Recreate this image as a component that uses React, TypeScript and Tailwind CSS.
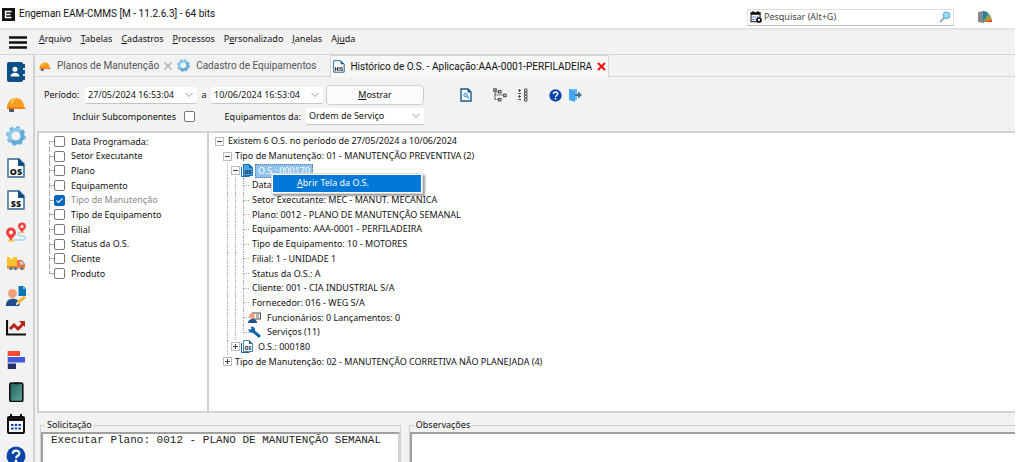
import { useState } from 'react';
import type { ReactNode } from 'react';

const HelmetIcon = ({ size }: { size: number }) => (
  <svg width={size} height={size} viewBox="0 0 20 20">
    <path d="M3 14l5 1v3H4l-1-1z" fill="#4b5563" />
    <path d="M1 14C1 8 5 4 10 4c5 0 8 4 8 9l2 2H1z" fill="#fb9d1e" />
    <path d="M4 8c2-3 4-4 7-4-3 2-4 4-4 7z" fill="#fdbf4e" />
    <path d="M1 13h17l2 2H1z" fill="#f4801f" />
  </svg>
);

const GearIcon = ({ size }: { size: number }) => (
  <svg width={size} height={size} viewBox="0 0 20 20" fill="none">
    <circle cx="10" cy="10" r="8.6" stroke="#6cb2dc" strokeWidth="2.4" strokeDasharray="3.4 3.35" />
    <circle cx="10" cy="10" r="6.6" stroke="#8cc8ea" strokeWidth="4" />
    <path d="M14.600 5.400a6.500 6.500 0 0 1-9.200 9.200" stroke="#62a9d4" strokeWidth="3.800" />
  </svg>
);

const FileIcon = ({ label, size }: { label: string; size: number }) => (
  <svg width={size} height={size} viewBox="0 0 20 20">
    <path d="M2 1h11l5 5v13H2z" fill="#fff" stroke="#2a6591" strokeWidth="1.4" />
    <path d="M12 1h1l5 5v2h-6z" fill="#0d4f80" />
    <text x="10" y="16.5" textAnchor="middle" fontSize="9" fontWeight="800" fontFamily="Open Sans, sans-serif" fill="#111">
      {label}
    </text>
  </svg>
);

const OsIcon = ({ selected }: { selected?: boolean }) => (
  <svg width="12" height="13" viewBox="0 0 12 13">
    <path d="M.5 3v9.500h8" fill="none" stroke={selected ? '#1672b8' : '#2a6591'} />
    <path d="M2.500 .5h6l3 3v8h-9z" fill={selected ? '#4ba3e3' : '#fff'} stroke={selected ? '#1672b8' : '#4a86b0'} />
    <path d="M8 .5v3.500h3.500z" fill={selected ? '#1672b8' : '#2a6591'} />
    <text x="7" y="9.500" textAnchor="middle" fontSize="5" fontWeight="800" fontFamily="Open Sans, sans-serif" fill="#173d5c">
      OS
    </text>
  </svg>
);

const HelpIcon = ({ size }: { size: number }) => (
  <svg width={size} height={size} viewBox="0 0 20 20" fill="none">
    <circle cx="10" cy="10" r="9.500" fill="#0a45a8" />
    <path d="M6.800 7.800c0-4.200 6.600-4.200 6.600-.4 0 2.400-3.300 2.300-3.300 4.800" stroke="#fff" strokeWidth="2.200" />
    <circle cx="10" cy="15" r="1.400" fill="#fff" />
  </svg>
);

const ContactsIcon = () => (
  <svg width="20" height="20" viewBox="0 0 20 20">
    <rect x="1" width="16" height="20" rx="2" fill="#0b4f86" />
    <path d="M16.500 2h2.500v4h-2.500zM16.500 8h2.500v4h-2.500zM16.500 14h2.500v4h-2.500z" fill="#0b4f86" />
    <circle cx="9" cy="7.200" r="2.500" fill="#fff" />
    <path d="M4.500 14.500c0-5 9-5 9 0z" fill="#fff" />
  </svg>
);

const RouteIcon = () => (
  <svg width="20" height="20" viewBox="0 0 20 20">
    <path d="M6 18h11c3 0 3-4 0-4h-3c-3 0-3-4 2-4" fill="none" stroke="#a9d6ee" strokeWidth="1.300" />
    <ellipse cx="5" cy="18.500" rx="3.500" ry="1.300" fill="#f7c64a" />
    <ellipse cx="16" cy="10.500" rx="2.500" ry="1" fill="#f7c64a" />
    <path d="M5 18.500C2 14 0 13 0 10.500a5 5 0 0 1 10 0C10 13 8 14 5 18.500z" fill="#f0413f" />
    <circle cx="5" cy="10.500" r="1.900" fill="#fff" />
    <path d="M16 10.500c-2-3-4-4-4-6a4 4 0 0 1 8 0c0 2-2 3-4 6z" fill="#f0413f" />
    <circle cx="16" cy="4.500" r="1.500" fill="#fff" />
  </svg>
);

const TruckIcon = () => (
  <svg width="20" height="20" viewBox="0 0 20 20">
    <path d="M1 3h3v2h3V3h4v10H1z" fill="#fbc02d" />
    <path d="M11 6h5l3 4v4h-8z" fill="#f26b4a" />
    <path d="M14 7.500h2l2 3h-4z" fill="#b9dcf2" />
    <path d="M1 12h18v2.500H1z" fill="#e88a2d" />
    <circle cx="5" cy="14.500" r="1.800" fill="#6b7684" />
    <circle cx="9.500" cy="14.500" r="1.800" fill="#6b7684" />
    <circle cx="16" cy="14.500" r="1.800" fill="#6b7684" />
  </svg>
);

const UserEditIcon = () => (
  <svg width="20" height="20" viewBox="0 0 20 20">
    <path d="M12.500 0h5l2.500 2.500V10h-7.500z" fill="#0b74b8" />
    <path d="M17 0v3h3z" fill="#7cc4ee" />
    <circle cx="6.500" cy="7.500" r="4.500" fill="#f2a07b" />
    <path d="M0 19c0-8 13-8 14-1l-1 2H0z" fill="#1f4e8c" />
    <path d="M10 19l1-3.500 7-6 2 2.300-7 6.200z" fill="#f6b63c" />
    <path d="M10 19l1-3 2 2z" fill="#fff" />
  </svg>
);

const TrendIcon = () => (
  <svg width="20" height="20" viewBox="0 0 20 20" fill="none">
    <path d="M1 2v14.500h19" stroke="#111" strokeWidth="2.200" />
    <path d="M4 11l4-4 4 4 5-5" stroke="#b32318" strokeWidth="3" />
    <path d="M13 3h6v6z" fill="#b32318" />
  </svg>
);

const BarsIcon = () => (
  <svg width="20" height="20" viewBox="0 0 20 20">
    <path d="M1.500 1v18" stroke="#c5c9d0" />
    <path d="M2 1h12v5H2z" fill="#fb4a32" />
    <path d="M2 7h17v5.500H2z" fill="#3f5bd8" />
    <path d="M2 13.500h8V19H2z" fill="#27306b" />
  </svg>
);

const PhoneIcon = () => (
  <svg width="20" height="20" viewBox="0 0 20 20">
    <defs>
      <linearGradient id="screen" x1="0" y1="0" x2="1" y2="1">
        <stop offset="0" stopColor="#1f5f5f" />
        <stop offset="1" stopColor="#63a59a" />
      </linearGradient>
    </defs>
    <rect x="3.800" y="1" width="13" height="18.500" rx="1.500" fill="url(#screen)" stroke="#111" strokeWidth="1.600" />
    <path d="M8 1.500h5" stroke="#111" strokeWidth="1.500" />
  </svg>
);

const CalendarIcon = () => (
  <svg width="20" height="20" viewBox="0 0 20 20">
    <path d="M5 0v4M15 0v4" stroke="#111" strokeWidth="2" />
    <rect x="2" y="3" width="16" height="16" rx="1" fill="#fff" stroke="#111" strokeWidth="2" />
    <path d="M2 3h16v4H2z" fill="#111" />
    <path d="M5 11h10M5 14.500h10" stroke="#1648a5" strokeWidth="2" strokeDasharray="2.500 1.250" />
  </svg>
);

const MagnifierIcon = () => (
  <svg width="12" height="12" viewBox="0 0 12 12">
    <path d="M1 11l4-4" stroke="#8a8f99" strokeWidth="1.600" />
    <circle cx="7.500" cy="4.300" r="3.400" fill="#9ddcf7" stroke="#5aa7cf" />
  </svg>
);

const sidebarItems = [
  { name: 'Contatos', icon: <ContactsIcon /> },
  { name: 'Planos de Manutenção', icon: <HelmetIcon size={20} /> },
  { name: 'Equipamentos', icon: <GearIcon size={20} /> },
  { name: 'Ordens de Serviço', icon: <FileIcon label="OS" size={20} /> },
  { name: 'Solicitações de Serviço', icon: <FileIcon label="SS" size={20} /> },
  { name: 'Rotas', icon: <RouteIcon /> },
  { name: 'Transporte', icon: <TruckIcon /> },
  { name: 'Funcionários', icon: <UserEditIcon /> },
  { name: 'Indicadores', icon: <TrendIcon /> },
  { name: 'Gantt', icon: <BarsIcon /> },
  { name: 'Mobile', icon: <PhoneIcon /> },
  { name: 'Calendário', icon: <CalendarIcon /> },
  { name: 'Ajuda', icon: <HelpIcon size={20} /> }
];

// [text before the access key, access key, rest]
const menuItems = [
  ['', 'A', 'rquivo'],
  ['', 'T', 'abelas'],
  ['', 'C', 'adastros'],
  ['', 'P', 'rocessos'],
  ['P', 'e', 'rsonalizado'],
  ['', 'J', 'anelas'],
  ['Aj', 'u', 'da']
];

const groupings = [
  'Data Programada:',
  'Setor Executante',
  'Plano',
  'Equipamento',
  'Tipo de Manutenção',
  'Tipo de Equipamento',
  'Filial',
  'Status da O.S.',
  'Cliente',
  'Produto'
];

const orderDetails = [
  'Setor Executante: MEC - MANUT. MECANICA',
  'Plano: 0012 - PLANO DE MANUTENÇÃO SEMANAL',
  'Equipamento: AAA-0001 - PERFILADEIRA',
  'Tipo de Equipamento: 10 - MOTORES',
  'Filial: 1 - UNIDADE 1',
  'Status da O.S.: A',
  'Cliente: 001 - CIA INDUSTRIAL S/A',
  'Fornecedor: 016 - WEG S/A'
];

const Combo = ({ id, label, value, className }: { id: string; label: string; value: string; className: string }) => (
  <div className={`relative h-[17px] ${className}`}>
    <select
      id={id}
      aria-label={label}
      className="w-full h-full appearance-none bg-white border-b border-[#c4c4c4] rounded-xs pl-[3px] pr-4 leading-4 outline-none"
    >
      <option>{value}</option>
    </select>
    <svg className="absolute right-1 top-[5px] pointer-events-none" width="8" height="6" viewBox="0 0 8 6">
      <path d="M.5 1L4 4.500 7.500 1" fill="none" stroke="#999" />
    </svg>
  </div>
);

const Expander = ({ open }: { open?: boolean }) => (
  <button
    aria-label={open ? 'Recolher' : 'Expandir'}
    className="w-[9px] h-[9px] shrink-0 bg-white border border-[#bdbdbd] flex items-center justify-center"
  >
    <svg width="5" height="5" viewBox="0 0 5 5">
      <path d={open ? 'M0 2.500h5' : 'M0 2.500h5M2.500 0v5'} stroke="#444" />
    </svg>
  </button>
);

const Guide = ({ className }: { className: string }) => (
  <span className={`self-stretch shrink-0 border-l border-dotted border-[#a8a8a8] ${className}`}></span>
);

const Leaf = ({ children, last }: { children: ReactNode; last?: boolean }) => (
  <li className="flex items-center pl-4">
    <Guide className="w-2" />
    <Guide className="w-2" />
    <span className="self-stretch w-[9px] shrink-0 flex flex-col">
      <span className="flex-1 w-[6px] border-l border-b border-dotted border-[#a8a8a8]"></span>
      <span className={`flex-1 ${last ? '' : 'border-l border-dotted border-[#a8a8a8]'}`}></span>
    </span>
    {children}
  </li>
);

const ToolButton = ({ label, children }: { label: string; children: ReactNode }) => (
  <button aria-label={label} className="w-[14px] h-[14px] flex items-center justify-center">
    {children}
  </button>
);

const App = () => {
  const [checked, setChecked] = useState(['Tipo de Manutenção']);

  const toggle = (name: string) => {
    setChecked(checked.includes(name) ? checked.filter((c) => c !== name) : [...checked, name]);
  };

  return (
    <div className="h-screen flex flex-col overflow-hidden bg-white pr-[9px] font-['Noto_Sans',sans-serif] text-[9px] leading-[14px] text-[#111] whitespace-nowrap">
      {/* Title bar */}
      <header className="h-7 shrink-0 flex items-center pl-[2px] pr-[23px]">
        <svg width="13" height="13" viewBox="0 0 13 13" className="shrink-0">
          <rect width="13" height="13" fill="#111" />
          <path d="M9.500 3.500h-6v6h6M3.500 6.500h5" fill="none" stroke="#fff" strokeWidth="1.400" />
        </svg>
        <h1 className="ml-1 font-[Roboto,sans-serif] text-[10px]">Engeman EAM-CMMS [M - 11.2.6.3] - 64 bits</h1>
        <div className="ml-auto mt-[6px] w-[207px] h-[17px] flex items-center gap-[2px] px-[2px] border border-[#e0e0e0] border-b-[#bbb]">
          <svg width="12" height="12" viewBox="0 0 12 12" className="shrink-0">
            <path d="M3 0v2M8 0v2" stroke="#111" strokeWidth="1.300" />
            <rect x="1" y="1.700" width="9" height="9" fill="#fff" stroke="#111" />
            <path d="M1 1.500h9.500v2.300H1z" fill="#111" />
            <path d="M2.500 6h6M2.500 8.500h3" stroke="#1b45d0" strokeDasharray="1.500 .7" />
            <circle cx="9" cy="9" r="2" fill="#fff" stroke="#111" strokeWidth="1.700" />
          </svg>
          <input aria-label="Pesquisar" placeholder="Pesquisar (Alt+G)" className="flex-1 min-w-0 outline-none placeholder:text-[#444]" />
          <MagnifierIcon />
        </div>
        <button aria-label="Tema" className="ml-6 mt-[6px]">
          <svg width="14" height="12" viewBox="0 0 14 12">
            <path d="M0 1l6-1v12l-6-1z" fill="#85898d" />
            <path d="M5 0c5 0 8 4 9 11H5z" fill="#2c7f9f" />
            <path d="M5 11l5-8c2 1 3 3 3 4z" fill="#79b051" />
            <path d="M5 11l8-5 1 5z" fill="#ee8a2c" />
            <path d="M5 11l9-2v2z" fill="#d94732" />
          </svg>
        </button>
      </header>

      {/* Menu bar */}
      <nav className="h-[27px] shrink-0 flex items-center bg-[#f2f2f2] border-t-2 border-b border-t-[#e3e3e3] border-b-[#d5d5d5]">
        <button aria-label="Menu" className="w-[39px] pl-[9px]">
          <svg width="18" height="13" viewBox="0 0 18 13">
            <path d="M0 1.500h18M0 6.500h18M0 11.500h18" stroke="#111" strokeWidth="2.600" />
          </svg>
        </button>
        <div className="flex gap-[9px] pb-[6px]">
          {menuItems.map(([before, key, after]) => (
            <button key={before + key + after}>
              {before}
              <u>{key}</u>
              {after}
            </button>
          ))}
        </div>
      </nav>

      <div className="flex-1 min-h-0 flex bg-[#f2f2f2]">
        {/* Sidebar */}
        <aside className="w-[35px] shrink-0 border-r-2 border-[#d0d0d0] flex flex-col gap-3 pt-[7px] pl-[6px] overflow-hidden">
          {sidebarItems.map((item) => (
            <button key={item.name} aria-label={item.name} className="w-5 h-5 shrink-0">
              {item.icon}
            </button>
          ))}
        </aside>

        <main className="flex-1 min-w-0 flex flex-col">
          {/* Tabs */}
          <div className="h-[22px] shrink-0 flex font-[Roboto,sans-serif] text-[10px] text-[#555]">
            <div className="flex items-center pl-1 border-b border-[#d5d5d5]">
              <HelmetIcon size={12} />
              <button className="ml-[6px]">Planos de Manutenção</button>
              <button aria-label="Fechar Planos de Manutenção" className="ml-[5px]">
                <svg width="8" height="8" viewBox="0 0 8 8">
                  <path d="M.5 .5l7 7M7.500 .5l-7 7" stroke="#aaa" strokeWidth="1.300" />
                </svg>
              </button>
              <span className="ml-[5px]">
                <GearIcon size={13} />
              </span>
              <button className="ml-[6px] pr-[14px]">Cadastro de Equipamentos</button>
            </div>
            <div className="flex items-center px-[2px] bg-[#f8f8f8] border border-b-0 border-[#d5d5d5] text-[#111]">
              <svg width="12" height="13" viewBox="0 0 12 13">
                <path d="M.7 .7h7l3.500 3.500v8H.7z" fill="#fff" stroke="#2a6591" />
                <path d="M7.500 .7v3.500h3.700z" fill="#2a6591" />
                <path d="M2.500 7v4M4.500 7v4M2.500 9h2M6 7v4M9.500 7.500h-2v1.500h2v1.500h-2" fill="none" stroke="#333" strokeWidth=".9" />
              </svg>
              <button className="ml-[5px]">Histórico de O.S. - Aplicação:AAA-0001-PERFILADEIRA</button>
              <button aria-label="Fechar Histórico de O.S." className="ml-[5px]">
                <svg width="9" height="9" viewBox="0 0 9 9">
                  <path d="M1 1l7 7M8 1L1 8" stroke="#f00f0f" strokeWidth="2" />
                </svg>
              </button>
            </div>
            <div className="flex-1 border-b border-[#d5d5d5]"></div>
          </div>

          {/* Filters */}
          <form className="h-[54px] shrink-0 pt-2 pl-[9px] flex flex-col gap-[3px]" onSubmit={(e) => e.preventDefault()}>
            <div className="h-5 flex items-center">
              <label htmlFor="start" className="w-[41px]">Período:</label>
              <Combo id="start" label="Período inicial" value="27/05/2024 16:53:04" className="w-28" />
              <label htmlFor="end" className="w-[14px] text-center">a</label>
              <Combo id="end" label="Período final" value="10/06/2024 16:53:04" className="w-28" />
              <button className="ml-[3px] w-[98px] h-5 rounded-sm border border-[#cfcfcf] bg-[#fbfbfb]">
                <u>M</u>ostrar
              </button>
              <div className="ml-[35px] flex items-center">
                <ToolButton label="Visualizar">
                  <svg width="12" height="14" viewBox="0 0 12 14">
                    <path d="M1 1h7l3 3v9H1z" fill="#fff" stroke="#155b8f" strokeWidth="1.400" />
                    <path d="M7.500 .5v4H11z" fill="#155b8f" />
                    <circle cx="5.500" cy="7" r="1.700" fill="#c9e8f7" stroke="#3c8fbd" />
                    <path d="M7 8.500l2 2" stroke="#3c8fbd" strokeWidth="1.300" />
                  </svg>
                </ToolButton>
                <span className="ml-5">
                  <ToolButton label="Expandir tudo">
                    <svg width="14" height="14" viewBox="0 0 14 14" fill="none" stroke="#555" strokeWidth="1.200">
                      <path d="M2 3v8.500h4M2 7h8M2 4h4" strokeDasharray="1.500 .6" />
                      <rect x=".8" y=".8" width="2.400" height="2.400" />
                      <rect x="5.500" y="2.500" width="2.400" height="2.400" />
                      <rect x="10.700" y="6.200" width="2.400" height="2.400" />
                      <rect x="5.500" y="10.500" width="2.400" height="2.400" />
                    </svg>
                  </ToolButton>
                </span>
                <span className="ml-[9px]">
                  <ToolButton label="Recolher tudo">
                    <svg width="12" height="14" viewBox="0 0 12 14" fill="none" stroke="#555">
                      <path d="M2.500 1v12" strokeDasharray="1 1" />
                      <path d="M1 2.500h3M1 5.500h3M1 8.500h3M1 11.500h3" />
                      <path d="M7.500 1h2.500v2.500H7.500zM7.500 4.200h2.500v2.500H7.500zM7.500 7.400h2.500v2.500H7.500zM7.500 10.600h2.500v2.500H7.500z" />
                    </svg>
                  </ToolButton>
                </span>
                <span className="ml-[18px]">
                  <ToolButton label="Ajuda">
                    <HelpIcon size={13} />
                  </ToolButton>
                </span>
                <span className="ml-[6px]">
                  <ToolButton label="Sair">
                    <svg width="14" height="14" viewBox="0 0 14 14">
                      <path d="M1 1h8v11H1z" fill="#6fbdf5" />
                      <path d="M1 1l6 2v11l-6-2z" fill="#42a5f5" />
                      <path d="M7 6h3V3.500L14 7l-4 3.500V8H7z" fill="#3f7396" />
                    </svg>
                  </ToolButton>
                </span>
              </div>
            </div>
            <div className="h-[17px] flex items-center">
              <label htmlFor="sub" className="w-[140px] pr-2 text-right">Incluir Subcomponentes</label>
              <input id="sub" type="checkbox" className="appearance-none w-[11px] h-[11px] border border-[#777] rounded-xs bg-white" />
              <label htmlFor="source" className="w-[111px] pr-[5px] text-right">Equipamentos da:</label>
              <Combo id="source" label="Equipamentos da" value="Ordem de Serviço" className="w-[118px]" />
            </div>
          </form>

          {/* Grouping list and order tree */}
          <div className="flex-1 min-h-0 ml-[2px] flex border-2 border-r-0 border-[#d0d0d0] bg-white">
            <ul className="w-[170px] shrink-0 border-r-2 border-[#d0d0d0] pt-px">
              {groupings.map((name, index) => (
                <li key={name} className={`flex items-center pl-[10px] ${index % 3 === 1 ? 'h-[14px]' : 'h-[15px]'}`}>
                  <span className="self-stretch w-[5px] flex flex-col">
                    <span className={`flex-1 border-b border-dashed border-[#a8a8a8] ${index === 0 ? '' : 'border-l'}`}></span>
                    <span className={`flex-1 border-dashed border-[#a8a8a8] ${index === groupings.length - 1 ? '' : 'border-l'}`}></span>
                  </span>
                  <label className={`flex items-center gap-[6px] ${checked.includes(name) ? 'text-[#8a8a8a]' : ''}`}>
                    <span className="relative flex">
                      <input
                        type="checkbox"
                        checked={checked.includes(name)}
                        onChange={() => toggle(name)}
                        className="appearance-none w-[11px] h-[11px] border border-[#777] rounded-xs bg-white checked:bg-[#0067c0] checked:border-[#0067c0]"
                      />
                      {checked.includes(name) && (
                        <svg className="absolute inset-0 pointer-events-none" width="11" height="11" viewBox="0 0 11 11">
                          <path d="M2.500 5.500l2 2 4-4" fill="none" stroke="#fff" strokeWidth="1.100" />
                        </svg>
                      )}
                    </span>
                    {name}
                  </label>
                </li>
              ))}
            </ul>

            <ul className="h-[235px] flex-1 grid auto-rows-fr pl-[2px] mt-px">
              <li className="flex items-center gap-1 pl-1">
                <Expander open />
                Existem 6 O.S. no período de 27/05/2024 a 10/06/2024
              </li>
              <li className="flex items-center gap-[3px] pl-3">
                <Expander open />
                Tipo de Manutenção: 01 - MANUTENÇÃO PREVENTIVA (2)
              </li>
              <li className="flex items-center pl-4">
                <Guide className="w-1" />
                <Expander open />
                <span className="ml-[1px]">
                  <OsIcon selected />
                </span>
                <div className="relative ml-[2px] leading-[14px] px-[3px] bg-[#90c2ed] text-white outline-1 -outline-offset-1 outline-dotted outline-[#4b7ba6]">
                  O.S.: 000170
                  <div role="menu" className="absolute left-4 top-[9px] z-10 w-[152px] p-[1px] bg-white border border-[#ddd] shadow-[2px_2px_2px_rgba(0,0,0,0.4)]">
                    <button role="menuitem" className="block w-full h-[17px] pl-6 text-left bg-[#0078d7] text-white">
                      <u>A</u>brir Tela da O.S.
                    </button>
                  </div>
                </div>
              </li>
              <Leaf>Data</Leaf>
              {orderDetails.map((detail) => (
                <Leaf key={detail}>{detail}</Leaf>
              ))}
              <Leaf>
                <svg width="13" height="12" viewBox="0 0 13 12" className="-ml-1 mr-[6px]">
                  <rect x="4.500" y="1" width="8" height="6" fill="#fff" stroke="#444" />
                  <path d="M8 3h3M8 5h3" stroke="#666" />
                  <circle cx="4" cy="4" r="2.800" fill="#f2a07b" />
                  <path d="M0 11c0-5 8-5 9-1v1z" fill="#1f4e8c" />
                </svg>
                Funcionários: 0 Lançamentos: 0
              </Leaf>
              <Leaf last>
                <svg width="13" height="12" viewBox="0 0 13 12" className="-ml-1 mr-[6px]">
                  <path d="M4 4l7 6" stroke="#0f65a8" strokeWidth="3" strokeLinecap="round" />
                  <path d="M2.500 .5L4 3 3 4 .5 3C0 6 3 7.500 5 6.500L7 4C7.500 1.500 5 0 2.500 .5z" fill="#0f65a8" />
                </svg>
                Serviços (11)
              </Leaf>
              <li className="flex items-center pl-4">
                <Guide className="w-1" />
                <Expander />
                <span className="ml-[1px] mr-[5px]">
                  <OsIcon />
                </span>
                O.S.: 000180
              </li>
              <li className="flex items-center gap-[3px] pl-3">
                <Expander />
                Tipo de Manutenção: 02 - MANUTENÇÃO CORRETIVA NÃO PLANEJADA (4)
              </li>
            </ul>
          </div>

          {/* Request and notes */}
          <div className="h-[49px] shrink-0 flex gap-2 pt-[5px] pl-[5px]">
            <fieldset className="w-[37%] border border-b-0 border-[#d0d0d0] overflow-hidden">
              <legend className="ml-1 px-[2px]">
                <label htmlFor="request">Solicitação</label>
              </legend>
              <textarea
                id="request"
                readOnly
                defaultValue="Executar Plano: 0012 - PLANO DE MANUTENÇÃO SEMANAL"
                className="block w-full h-10 resize-none overflow-hidden outline-none bg-white border-2 border-t-[#a0a0a0] border-l-[#a0a0a0] border-[#d0d0d0] pl-2 font-['Liberation_Mono',monospace] text-[11px] leading-3 whitespace-pre text-[#222]"
              />
            </fieldset>
            <fieldset className="flex-1 border border-b-0 border-r-0 border-[#d0d0d0] overflow-hidden">
              <legend className="ml-1 px-[2px]">
                <label htmlFor="notes">Observações</label>
              </legend>
              <textarea
                id="notes"
                readOnly
                className="block w-full h-10 resize-none overflow-hidden outline-none bg-white border-2 border-r-0 border-t-[#a0a0a0] border-l-[#a0a0a0] border-[#d0d0d0]"
              />
            </fieldset>
          </div>
        </main>
      </div>
    </div>
  );
};

export default App;
